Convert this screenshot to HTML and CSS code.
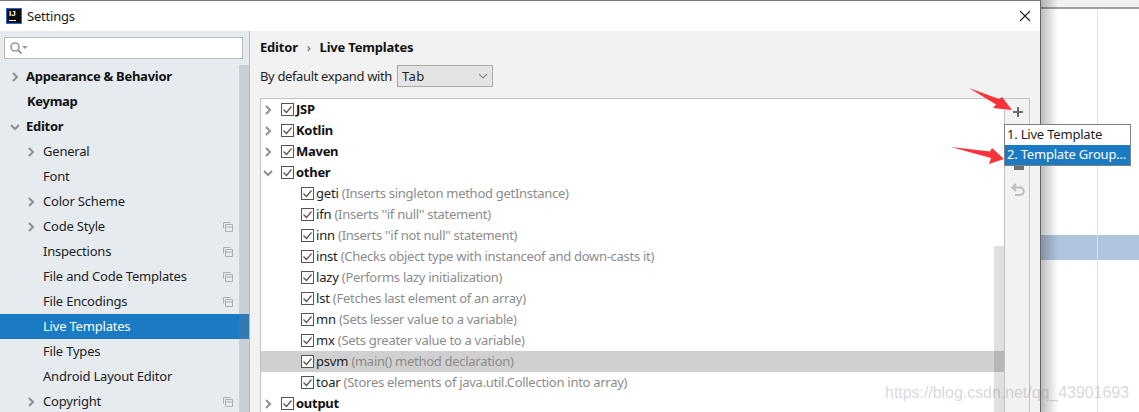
FILE: index.html
```html
<!DOCTYPE html>
<html lang="en">
  <head>
    <meta charset="UTF-8" />
    <title>Settings</title>
    <link rel="stylesheet" href="styles.css">
  </head>
  <body>
    <svg class="defs" width="0" height="0">
      <symbol id="check" viewBox="0 0 13 13">
        <rect x="0.5" y="0.5" width="12" height="12" fill="#fff" stroke="#555" />
        <path d="M2.5 6.5 L5.5 9.5 L10.5 3.5" fill="none" stroke="#555" stroke-width="1.2" />
      </symbol>
      <symbol id="right" viewBox="0 0 10 10">
        <path d="M3 1 L7 5 L3 9" fill="none" stroke="#8f8f8f" stroke-width="2" />
      </symbol>
      <symbol id="down" viewBox="0 0 10 10">
        <path d="M1 3 L5 7 L9 3" fill="none" stroke="#8f8f8f" stroke-width="2" />
      </symbol>
      <symbol id="copy" viewBox="0 0 10 10">
        <path d="M0.5 6.5 V0.5 H7.5 M2.5 2.5 H9.5 V9.5 H2.5 Z M2.5 5 H9.5" fill="none" stroke="#aab0b5" />
      </symbol>
    </svg>

    <div class="backdrop">
      <div class="backdrop-top"></div>
      <div class="backdrop-band"></div>
      <div class="backdrop-line"></div>
    </div>

    <div class="dialog">
      <div class="titlebar">
        <span class="logo"><span>IJ</span></span>
        <span class="title">Settings</span>
        <svg class="close" width="12" height="12" viewBox="0 0 12 12">
          <path d="M1 1 L11 11 M11 1 L1 11" stroke="#222" stroke-width="1.1" />
        </svg>
      </div>

      <div class="content">
        <div class="sidebar">
          <div class="search">
            <svg width="20" height="14" viewBox="0 0 20 14">
              <circle cx="6" cy="6" r="4" fill="none" stroke="#9a9a9a" stroke-width="1.6" />
              <path d="M9 9 L12.5 12.5" stroke="#9a9a9a" stroke-width="2" />
              <path d="M13 5 H19 L16 8 Z" fill="#9a9a9a" />
            </svg>
          </div>
          <div class="nav">
            <div class="nav-scroll"></div>
            <div class="nav-row top"><svg class="arrow"><use href="#right" /></svg><b>Appearance &amp; Behavior</b></div>
            <div class="nav-row top"><b class="no-arrow">Keymap</b></div>
            <div class="nav-row top"><svg class="arrow"><use href="#down" /></svg><b>Editor</b></div>
            <div class="nav-row sub"><svg class="arrow"><use href="#right" /></svg><span>General</span></div>
            <div class="nav-row sub"><span class="no-arrow">Font</span></div>
            <div class="nav-row sub"><svg class="arrow"><use href="#right" /></svg><span>Color Scheme</span></div>
            <div class="nav-row sub"><svg class="arrow"><use href="#right" /></svg><span>Code Style</span><svg class="copy"><use href="#copy" /></svg></div>
            <div class="nav-row sub"><span class="no-arrow">Inspections</span><svg class="copy"><use href="#copy" /></svg></div>
            <div class="nav-row sub"><span class="no-arrow">File and Code Templates</span><svg class="copy"><use href="#copy" /></svg></div>
            <div class="nav-row sub"><span class="no-arrow">File Encodings</span><svg class="copy"><use href="#copy" /></svg></div>
            <div class="nav-row sub selected"><span class="no-arrow">Live Templates</span></div>
            <div class="nav-row sub"><span class="no-arrow">File Types</span></div>
            <div class="nav-row sub"><span class="no-arrow">Android Layout Editor</span></div>
            <div class="nav-row sub"><svg class="arrow"><use href="#right" /></svg><span>Copyright</span><svg class="copy"><use href="#copy" /></svg></div>
          </div>
        </div>

        <div class="main">
          <div class="crumbs"><b>Editor</b><span class="sep">&#8250;</span><b>Live Templates</b></div>
          <div class="expand">
            <span class="expand-label">By default expand with</span>
            <div class="select">
              <span>Tab</span>
              <svg width="10" height="10" viewBox="0 0 10 10">
                <path d="M1 3 L5 7 L9 3" fill="none" stroke="#8a8a8a" stroke-width="1.1" />
              </svg>
            </div>
          </div>

          <div class="panel">
            <div class="tree">
              <div class="tree-scroll"></div>
              <div class="group"><svg class="arrow"><use href="#right" /></svg><svg class="box"><use href="#check" /></svg><b>JSP</b></div>
              <div class="group"><svg class="arrow"><use href="#right" /></svg><svg class="box"><use href="#check" /></svg><b>Kotlin</b></div>
              <div class="group"><svg class="arrow"><use href="#right" /></svg><svg class="box"><use href="#check" /></svg><b>Maven</b></div>
              <div class="group"><svg class="arrow"><use href="#down" /></svg><svg class="box"><use href="#check" /></svg><b>other</b></div>
              <div class="item"><svg class="box"><use href="#check" /></svg><span>geti <em>(Inserts singleton method getInstance)</em></span></div>
              <div class="item"><svg class="box"><use href="#check" /></svg><span>ifn <em>(Inserts ''if null'' statement)</em></span></div>
              <div class="item"><svg class="box"><use href="#check" /></svg><span>inn <em>(Inserts ''if not null'' statement)</em></span></div>
              <div class="item"><svg class="box"><use href="#check" /></svg><span>inst <em>(Checks object type with instanceof and down-casts it)</em></span></div>
              <div class="item"><svg class="box"><use href="#check" /></svg><span>lazy <em>(Performs lazy initialization)</em></span></div>
              <div class="item"><svg class="box"><use href="#check" /></svg><span>lst <em>(Fetches last element of an array)</em></span></div>
              <div class="item"><svg class="box"><use href="#check" /></svg><span>mn <em>(Sets lesser value to a variable)</em></span></div>
              <div class="item"><svg class="box"><use href="#check" /></svg><span>mx <em>(Sets greater value to a variable)</em></span></div>
              <div class="item selected"><svg class="box"><use href="#check" /></svg><span>psvm <em>(main() method declaration)</em></span></div>
              <div class="item"><svg class="box"><use href="#check" /></svg><span>toar <em>(Stores elements of java.util.Collection into array)</em></span></div>
              <div class="group"><svg class="arrow"><use href="#right" /></svg><svg class="box"><use href="#check" /></svg><b>output</b></div>
            </div>
            <div class="tools">
              <svg class="tool-add" width="12" height="12" viewBox="0 0 12 12">
                <path d="M6 1 V11 M1 6 H11" stroke="#6e6e6e" stroke-width="2" />
              </svg>
              <svg class="tool-paste" width="12" height="12" viewBox="0 0 12 12">
                <rect x="1" y="0" width="10" height="12" fill="#6e6e6e" />
              </svg>
              <svg class="tool-undo" width="14" height="14" viewBox="0 0 14 14">
                <path d="M5 1 L1.5 4.5 L5 8 M2 4.5 H9 A3.7 3.7 0 0 1 9 12 H4" fill="none" stroke="#bdbdbd" stroke-width="2" />
              </svg>
            </div>
          </div>
        </div>
      </div>
    </div>

    <div class="popup">
      <div class="popup-row">1. Live Template</div>
      <div class="popup-row active">2. Template Group...</div>
    </div>

    <svg class="marks" width="1139" height="412" viewBox="0 0 1139 412">
      <path d="M969 88 L999 99 L1002 97 L1012 110 L993 108 L996 104.5 Z" fill="#f8333a" />
      <path d="M951 147 L990 151.5 L992 148 L1004 159 L989 164 L991 158 Z" fill="#f8333a" />
    </svg>

    <div class="watermark">https://blog.csdn.net/qq_43901693</div>
  </body>
</html>
```

FILE: styles.css
```css
* {
  box-sizing: border-box;
}
html, body {
  margin: 0;
  height: 100%;
}
body {
  position: relative;
  width: 1139px;
  height: 412px;
  overflow: hidden;
  background: #fff;
  font-family: "Noto Sans", "Noto Sans CJK SC", sans-serif;
  font-size: 13px;
  letter-spacing: -0.2px;
  color: #1e1e1e;
}
b {
  color: #111;
  letter-spacing: -0.28px;
}
.defs {
  position: absolute;
}

/* window behind the dialog */
.backdrop {
  position: absolute;
  left: 1040px;
  top: 0;
  right: 0;
  bottom: 0;
}
.backdrop::after {
  content: "";
  position: absolute;
  left: 0;
  top: 0;
  bottom: 0;
  width: 18px;
  background: linear-gradient(to right, rgba(0, 0, 0, 0.28), rgba(0, 0, 0, 0));
}
.backdrop-top {
  height: 9px;
  background: #f0f0f0;
  border-bottom: 2px solid #a0a0a0;
}
.backdrop-band {
  position: absolute;
  left: 0;
  right: 0;
  top: 235px;
  height: 25px;
  background: #b0c4de;
}
.backdrop-line {
  position: absolute;
  left: 57px;
  top: 9px;
  bottom: 0;
  width: 1px;
  background: #e0e0e0;
}

.dialog {
  width: 1041px;
  height: 412px;
  display: flex;
  flex-direction: column;
  position: relative;
  border-top: 1px solid #777;
  border-right: 1px solid #666;
}
.titlebar {
  height: 30px;
  flex: none;
  background: #fff;
  display: flex;
  align-items: center;
  padding-left: 6px;
  position: relative;
}
.logo {
  width: 16px;
  height: 16px;
  background: #0d0d0d;
  border: 1px solid #1a6fd0;
  color: #fff;
  font-family: "Liberation Sans", sans-serif;
  font-size: 8px;
  font-weight: 700;
  letter-spacing: 0;
  padding: 1px 0 0 2px;
  margin-right: 5px;
  margin-top: -1px;
}
.logo span {
  display: block;
  height: 11px;
  line-height: 8px;
  width: 7px;
  border-bottom: 1px solid #fff;
}
.title {
  margin-top: -1px;
}
.close {
  position: absolute;
  right: 9px;
  top: 9px;
}
.content {
  flex: 1;
  display: flex;
  min-height: 0;
}

/* left nav */
.sidebar {
  width: 250px;
  flex: none;
  background: #e6ebf0;
  border-right: 1px solid #b8b8b8;
  overflow: hidden;
}
.search {
  margin: 6px 6px 5px 4px;
  height: 22px;
  background: #fff;
  border: 1px solid #b9b9b9;
  padding: 3px 0 0 4px;
}
.nav {
  position: relative;
}
.nav-scroll {
  position: absolute;
  right: 0;
  top: 1px;
  bottom: 0;
  width: 10px;
  background: rgba(120, 125, 130, 0.25);
  z-index: 1;
}
.nav-row {
  height: 25px;
  display: flex;
  align-items: center;
  padding-left: 10px;
  position: relative;
}
.nav-row > b, .nav-row > span {
  padding-bottom: 2px;
}
.nav-row.sub {
  padding-left: 26px;
}
.nav-row .arrow {
  width: 10px;
  height: 10px;
  margin-right: 6px;
  flex: none;
}
.nav-row.sub .arrow {
  margin-right: 7px;
}
.no-arrow {
  margin-left: 17px;
}
.copy {
  width: 10px;
  height: 10px;
  position: absolute;
  left: 223px;
  top: 8px;
}
.nav-row.selected {
  background: #1a7ac4;
  color: #fff;
}

/* right pane */
.main {
  flex: 1;
  min-width: 0;
  background: #f2f2f2;
  padding: 6px 0 0 10px;
}
.crumbs {
  height: 21px;
  display: flex;
  align-items: center;
  padding-bottom: 2px;
}
.crumbs b {
  letter-spacing: -0.2px;
}
.crumbs .sep {
  margin: 0 9px;
  color: #555;
}
.expand {
  margin-top: 7px;
  height: 22px;
  display: flex;
  align-items: center;
  gap: 5px;
}
.expand-label {
  letter-spacing: -0.36px;
  padding-bottom: 1px;
}
.select {
  width: 96px;
  height: 22px;
  background: #e4e4e4;
  border: 1px solid #ababab;
  display: flex;
  align-items: center;
  justify-content: space-between;
  padding: 0 4px;
  letter-spacing: 0.3px;
}
.panel {
  margin-top: 11px;
  width: 770px;
  display: flex;
  height: 320px;
}
.tree {
  width: 745px;
  flex: none;
  background: #fff;
  border: 1px solid #c2c2c2;
  border-bottom: 0;
  position: relative;
  overflow: hidden;
}
.tree-scroll {
  position: absolute;
  right: 0;
  top: 147px;
  bottom: 0;
  width: 10px;
  background: rgba(0, 0, 0, 0.12);
  z-index: 1;
}
.group, .item {
  height: 21px;
  display: flex;
  align-items: center;
  white-space: pre;
}
.group > b, .item > span {
  padding-bottom: 2px;
}
.group {
  padding-left: 2px;
}
.group .arrow {
  width: 10px;
  height: 10px;
  margin-right: 8px;
}
.group .box, .item .box {
  width: 13px;
  height: 13px;
  flex: none;
}
.group .box {
  margin-right: 2px;
}
.item .box {
  margin-right: 2px;
}
.item {
  padding-left: 40px;
}
.item em {
  font-style: normal;
  color: #8c8c8c;
  letter-spacing: -0.28px;
}
.item.selected {
  background: #d0d0d0;
}
.tools {
  width: 25px;
  flex: none;
  border-top: 1px solid #c2c2c2;
  border-right: 1px solid #c2c2c2;
  position: relative;
}
.tool-add {
  position: absolute;
  left: 7px;
  top: 7px;
}
.tool-paste {
  position: absolute;
  left: 8px;
  top: 59px;
}
.tool-undo {
  position: absolute;
  left: 6px;
  top: 84px;
}

/* overlays */
.popup {
  position: absolute;
  left: 1004px;
  top: 124px;
  width: 127px;
  height: 42px;
  background: #fff;
  border: 1px solid #808080;
}
.popup-row {
  height: 20px;
  line-height: 18px;
  padding-left: 2px;
  white-space: nowrap;
}
.popup-row.active {
  background: #1a7ac4;
  color: #fff;
}
.marks {
  position: absolute;
  left: 0;
  top: 0;
}
.watermark {
  position: absolute;
  right: 10px;
  top: 384px;
  font-family: "Liberation Sans", sans-serif;
  font-size: 16px;
  letter-spacing: -0.05px;
  color: rgba(120, 120, 120, 0.3);
}
```
